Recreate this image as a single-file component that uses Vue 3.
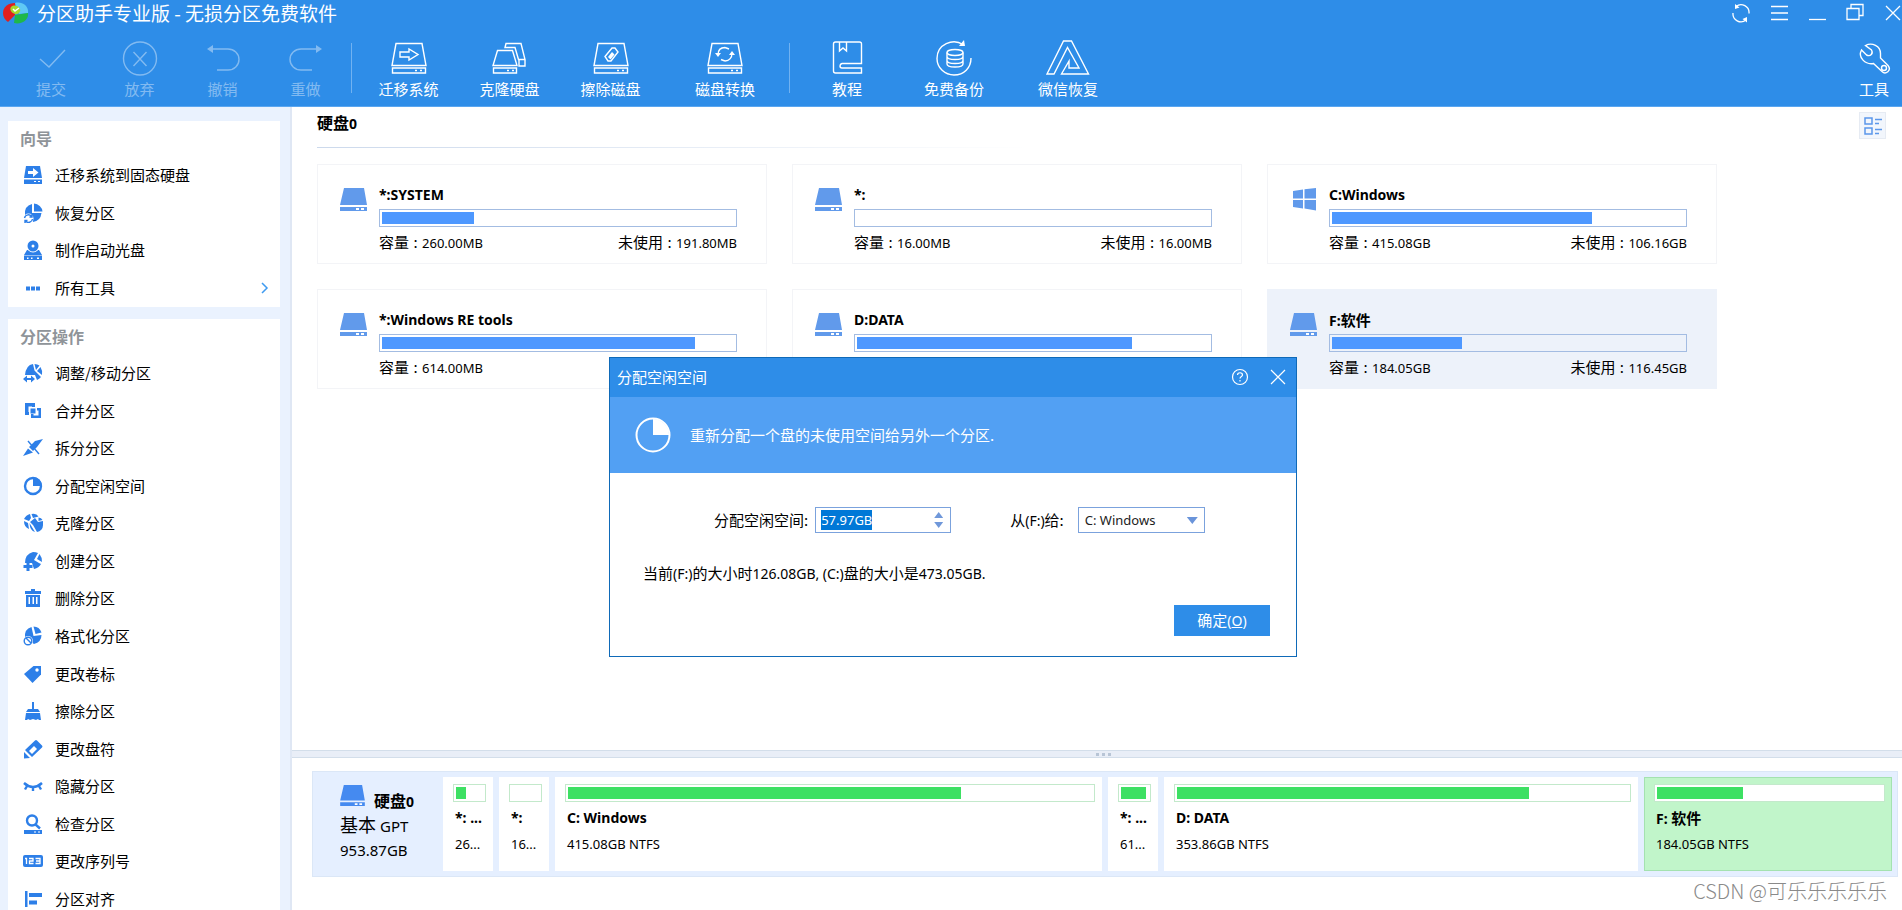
<script setup>
import { onMounted, ref } from 'vue'

const drive = '<path d="M9 3.500h26l4 22H5z"/><path d="M5.500 28h33v5h-33z"/><path d="M28 30.500h2m3 0h2"/>'

const toolIcons = {
  commit: '<path d="M11 19l9 8 16-17"/>',
  discard: '<circle cx="22" cy="18.500" r="16.500"/><path d="M15.500 12l13 14m0-14l-13 14"/>',
  undo: '<path d="M10 9h17a11 10.500 0 0 1 0 21H16"/><path class="solid" d="M6 9l6-4v8z"/>',
  redo: '<path d="M34 9H17a11 10.500 0 0 0 0 21h11"/><path class="solid" d="M38 9l-6-4v8z"/>',
  migrate: drive + '<path d="M13 12h9V9l9 5.500-9 5.500v-3h-9z"/>',
  clone: '<path d="M9.500 10.500h15L29 25.500H5zM5.500 28h23v5h-23zM17 7.500l1-4h15l4 16h-6.500L27 7.500zM31 20v6h6v-6M19 30.500h2m3 0h2"/>',
  erase: drive + '<path d="M16 16.500l7-8.500h3l3 4-7 9h-3z"/><path class="solid" d="M19 17l4-5 2.500 2.500-4 5z"/>',
  convert: drive + '<path d="M15 15c0-5 3-7.500 7-7.500M29 13c0 5-3 8-7 8M22 7.500l4 1.500M22 21l-4-1.500"/><path class="solid" d="M12 13h6l-3 4zM26 15h6l-3-4z"/>',
  book: '<path d="M36.500 23.500V4q0-2-2-2H10.500q-2 0-2 2v27q0 2 2 2h26V28H17q-2 0-2-2t2-2.500zM14.500 2v9l3.500-3 3.500 3V2"/>',
  backup: '<path d="M31 4.500C21-2 5 4 5 18.500 5 28 13 35 22 35c10 0 17-7 17-17"/><path class="solid" d="M32 0l1 6h-6z"/><ellipse cx="23" cy="12.500" rx="8" ry="3"/><path d="M15 12.500V24c0 4 16 4 16 0V12.500M15 16.500c0 4 16 4 16 0M15 20.500c0 4 16 4 16 0"/>',
  wechat: '<path d="M17.500 1h8l17 33h-27L23 21v7h10L21.500 7.500 8 34H1z"/>',
  wrench: '<path d="M13.500 5.500C20 2 28.500 6 28.500 13.500v4.500l7.500 7.500c4 5-2.500 9.500-6 6L21.500 23.500c-8 1.500-16-6-12-13.500l5 5c4 2 7-1.500 5-5z"/><circle cx="32" cy="28" r="2.500"/>'
}

const groups = [
  { key: 'edit', items: [['commit', '提交', 'wide'], ['discard', '放弃', ''], ['undo', '撤销', ''], ['redo', '重做', '']] },
  { key: 'drives', items: [['migrate', '迁移系统', ''], ['clone', '克隆硬盘', ''], ['erase', '擦除磁盘', ''], ['convert', '磁盘转换', 'wide']] },
  { key: 'more', items: [['book', '教程', 'wide'], ['backup', '免费备份', ''], ['wechat', '微信恢复', 'wide']] }
]

const icons = {
  migrate: '<path d="M3 1h14l2 12H1z"/><path d="M1 14.500h18V19H1z"/><path class="w" d="M5 6h5V3l5.500 4.500L10 12V9H5z"/><path class="w" d="M11 16h2v1h-2zm4 0h2v1h-2z"/>',
  recover: '<path d="M9 1v9h9.500q-1 8-8.500 9l-1-6-7-1Q1 3 9 1z"/><path d="M11 0.500a9 9 0 0 1 8.500 8H11z"/><circle class="w" cx="5.500" cy="15.500" r="5"/><path class="t" d="M1.500 15a4 4 0 0 1 7.500-1M9.500 16a4 4 0 0 1-7 2M9 11.500V14H6.500M2 20v-2.500h2.500"/>',
  boot: '<path d="M4 10l-3 5h18l-3-5zM1 15.500h18V20H1z"/><circle class="w" cx="10" cy="6" r="6.500"/><circle cx="10" cy="6" r="5.500"/><circle class="w" cx="10" cy="6" r="1.500"/><path class="w" d="M4 17.500h1.500V19H4zm4 0h1.500V19H8zm6 0h2V19h-2z"/>',
  dots: '<path d="M3 8.500h4v4H3zm5 0h4v4H8zm5 0h4v4h-4z"/>',
  resize: '<path d="M10 1l1.500 6.500L18 14a9 9 0 0 1-4 3l-2-5H2Q3 2 10 1z"/><path d="M11.500 1q3 0 5 1.500L13 7zM17.500 4q2 3 1.500 8L14 8z"/><path d="M0 16l4-3.500V15h4v-2.500L12 16l-4 3.500V17H4v2.500z"/>',
  merge: '<path d="M2 2h10v4H9V5.500H5.500V11H6v3H2zM18 7v10H8v-4h2.500v1.500h5V9.500H14V7z"/><path d="M7.500 7.500h5v5h-5z"/>',
  split: '<path d="M20 1l-8 2-6 6 4 4 4-4zM5 10.500l5 4L0 18z"/><path class="t" d="M5 3l11 13"/>',
  alloc: '<path d="M10 1a9 9 0 0 1 9 9h-9z"/><circle class="s" cx="10" cy="10" r="8"/>',
  clone: '<path d="M1 6Q3 2 7 1l1 4-2 3zM8.500 1q5-1 7 2.500L10 5zM1 8l4 2 1 6Q1 14 1 8z"/><path d="M7 9l5-4 3 4 5-1v4a7 7 0 0 1-6 7l-4-7zM15.500 4.500q3 0 4 2.500l-4 1zM6.500 10l5.500 9Q7 18 6.500 10z"/>',
  create: '<path d="M10 1q3 0 5 1l-4 7 5 3 2 1q-2 4-7 5l-2-6H2Q2 3 10 1z"/><path d="M16.500 3q2.500 3 2.500 8l-5-3z"/><path d="M3.500 11h3v3h3v3h-3v3h-3v-3h-3v-3h3z"/>',
  trash: '<path d="M8 1h4v2h6v3H2V3h6zM3 7h14v12H3z"/><path class="w" d="M5.500 9H7v7H5.500zm4 0H11v7H9.500zm3.500 0h1.500v7H13z"/>',
  format: '<path d="M8.500 1l2 9 8-1q0 7-7.500 9L2 12Q1 3 8.500 1z"/><path d="M10.500 0.500q6 0 8 6l-6 1.500z"/><circle cx="5" cy="15" r="5" class="w"/><circle class="t" cx="5" cy="15" r="3.800"/><path class="t" d="M3 12l5 5"/>',
  tag: '<path d="M10.500 2H18v8.500L9.500 19 1 10z"/><circle class="w" cx="14" cy="6" r="1.700"/>',
  broom: '<path d="M9 1h2v7h4l2 3H3l2-3h4zM3 12h14l1 7h-2l-1-1-2 1-3-1-3 1-2-1-1 1H2z"/>',
  pencil: '<path d="M1 13l6 6-6 .500zM2 11L12 1.500q1-1 2 0l5 5q1 1 0 2L9 18z"/><path class="w" d="M6 12l5-5 3 3-5 5z"/>',
  hide: '<path class="s" d="M1 7q9 8 18 0M4 10l-2 3.500M10 11v4M16 10l2 3.500"/>',
  check: '<circle class="s" cx="9" cy="6.500" r="5"/><path class="s" d="M12 10l5 4.500"/><path d="M1 16h18v4H1z"/><path class="w" d="M11 17.500h2v1h-2zm4 0h2v1h-2z"/>',
  serial: '<rect x="0" y="4" width="20" height="12" rx="2"/><path class="ws" d="M2 7.500h1.500V13M6 7.500h4V10H6.500v2.500h4M12.500 7.500h4.500v5h-4.500M13 10h4"/>',
  align: '<path d="M2 2h2.500v16H2zM6 4h13v4H6zM6 11.500h8v4H6z"/>'
}

const wizard = [['migrate', '迁移系统到固态硬盘'], ['recover', '恢复分区'], ['boot', '制作启动光盘'], ['dots', '所有工具']]
const operations = [
  ['resize', '调整/移动分区'], ['merge', '合并分区'], ['split', '拆分分区'], ['alloc', '分配空闲空间'],
  ['clone', '克隆分区'], ['create', '创建分区'], ['trash', '删除分区'], ['format', '格式化分区'],
  ['tag', '更改卷标'], ['broom', '擦除分区'], ['pencil', '更改盘符'], ['hide', '隐藏分区'],
  ['check', '检查分区'], ['serial', '更改序列号'], ['align', '分区对齐']
]

const volumes = [
  { drive: '*:', label: 'SYSTEM', used: 26, size: '260.00MB', free: '191.80MB' },
  { drive: '*:', label: '', used: 0, size: '16.00MB', free: '16.00MB' },
  { drive: 'C:', label: 'Windows', used: 74, size: '415.08GB', free: '106.16GB', windows: true },
  { drive: '*:', label: 'Windows RE tools', used: 89, size: '614.00MB' },
  { drive: 'D:', label: 'DATA', used: 78, size: '' },
  { drive: 'F:', label: '软件', cjk: true, used: 37, size: '184.05GB', free: '116.45GB', active: true }
]

const segments = [
  { drive: '*:', label: '...', info: '26...', used: 36, weight: 0 },
  { drive: '*:', label: '', info: '16...', used: 0, weight: 0 },
  { drive: 'C:', label: 'Windows', info: '415.08GB NTFS', used: 75, weight: 530 },
  { drive: '*:', label: '...', info: '61...', used: 92, weight: 0 },
  { drive: 'D:', label: 'DATA', info: '353.86GB NTFS', used: 78, weight: 457 },
  { drive: 'F:', label: '软件', cjk: true, info: '184.05GB NTFS', used: 38, weight: 231, active: true }
]

const amount = ref('57.97GB')
const amountBox = ref(null)
onMounted(() => {
  amountBox.value.focus()
  amountBox.value.select()
})
</script>

<template>
  <div class="app">
    <header class="head">
      <div class="titlebar">
        <svg class="logo" viewBox="0 0 26 22">
          <path d="M12 1C5 1 0 5 0 11c0 4 2 7 5 9l7-7z" fill="#e01f1f" />
          <path d="M12 1c7-2 14 3 13 10l-9 1z" fill="#5fc8f5" />
          <path d="M25 11c1 7-7 12-14 10l1-8z" fill="#1fb84a" />
          <path d="M8 5c3-3 8-1 9 2s-2 6-5 5-6-4-4-7z" fill="#a5d92c" />
          <path d="M10 7l2 2 4-3" fill="none" stroke="#fff" stroke-width="1.5" />
        </svg>
        <h1>分区助手专业版 - 无损分区免费软件</h1>
        <div class="controls">
          <button aria-label="刷新"><svg viewBox="0 0 18 20"><path d="M4 3.500a8 8 0 0 1 13 7M14 17a8 8 0 0 1-13-7" /><path class="solid" d="M3 1l4.500 3.500L3 6zM15 19.500L10.500 16l4.500-2z" /></svg></button>
          <button aria-label="菜单"><svg viewBox="0 0 18 20"><path d="M1 3.500h17M1 10h17M1 16.500h17" /></svg></button>
          <button aria-label="最小化"><svg viewBox="0 0 18 20"><path d="M1 16.500h17" /></svg></button>
          <button aria-label="还原"><svg viewBox="0 0 18 20"><path d="M1 5.500h12v11H1zM5 5V1.500h12v11h-4" /></svg></button>
          <button aria-label="关闭"><svg viewBox="0 0 18 20"><path d="M2 3l14 14M16 3L2 17" /></svg></button>
        </div>
      </div>
      <nav class="toolbar">
        <div v-for="g in groups" :key="g.key" class="group" :class="g.key">
          <button v-for="t in g.items" :key="t[0]" :class="t[2]">
            <svg viewBox="0 0 44 36" v-html="toolIcons[t[0]]"></svg>
            <span>{{ t[1] }}</span>
          </button>
        </div>
        <div class="group end">
          <button><svg viewBox="0 0 44 36" v-html="toolIcons.wrench"></svg><span>工具</span></button>
        </div>
      </nav>
    </header>

    <div class="body">
      <aside class="side">
        <section>
          <h2>向导</h2>
          <ul class="wizard">
            <li v-for="w in wizard" :key="w[0]">
              <button>
                <svg viewBox="0 0 20 20" v-html="icons[w[0]]"></svg>{{ w[1] }}
                <svg v-if="w[0] === 'dots'" class="chev" viewBox="0 0 8 12"><path d="M1 1l5 5-5 5" /></svg>
              </button>
            </li>
          </ul>
        </section>
        <section>
          <h2>分区操作</h2>
          <ul class="ops">
            <li v-for="o in operations" :key="o[0]">
              <button><svg viewBox="0 0 20 20" v-html="icons[o[0]]"></svg>{{ o[1] }}</button>
            </li>
          </ul>
        </section>
      </aside>

      <main class="main">
        <div class="upper">
          <div class="disk-head">
            <h2>硬盘<b>0</b></h2>
            <button class="view" aria-label="视图">
              <svg viewBox="0 0 18 18"><path d="M1 1h7v6H1zM1 11h7v6H1zM11 2.500h7M11 6.500h4M11 12.500h7M11 16.500h4" /></svg>
            </button>
          </div>
          <div class="cards">
            <article v-for="v in volumes" :key="v.drive + v.label" :class="{ active: v.active }">
              <svg v-if="v.windows" class="disk" viewBox="0 0 27 23">
                <path d="M3 3l10-1.500v9H3zM14.500 1.300L26 0v10.500H14.500zM3 12h10v8.500L3 19zM14.500 12H26v10.500l-11.500-2z" />
              </svg>
              <svg v-else class="disk" viewBox="0 0 27 23">
                <path d="M4 0h20l3 17H0zM0 19h27v4H0z" /><path class="w" d="M16 20h3v2h-3zm5 0h3v2h-3z" />
              </svg>
              <div class="info">
                <h3>{{ v.drive }}<span :class="{ cjk: v.cjk }">{{ v.label }}</span></h3>
                <div class="bar"><i v-if="v.used" :style="{ width: v.used + '%' }"></i></div>
                <div class="nums">
                  <span v-if="v.size">容量<em>:</em><b>{{ v.size }}</b></span>
                  <span v-if="v.free">未使用<em>:</em><b>{{ v.free }}</b></span>
                </div>
              </div>
            </article>
          </div>
        </div>
        <div class="splitter"><i></i><i></i><i></i></div>
        <div class="lower">
          <div class="map">
            <div class="disk-info">
              <div class="row">
                <svg class="disk" viewBox="0 0 27 23">
                  <path d="M4 0h20l3 17H0zM0 19h27v4H0z" /><path class="w" d="M16 20h3v2h-3zm5 0h3v2h-3z" />
                </svg>
                <h2>硬盘<b>0</b></h2>
              </div>
              <p class="kind">基本 <span>GPT</span></p>
              <p class="total">953.87GB</p>
            </div>
            <div v-for="(s, n) in segments" :key="n" class="seg" :class="{ active: s.active, small: !s.weight }" :style="{ flexGrow: s.weight }">
              <div class="bar"><i v-if="s.used" :style="{ width: s.used + '%' }"></i></div>
              <h3>{{ s.drive }} <span :class="{ cjk: s.cjk }">{{ s.label }}</span></h3>
              <p>{{ s.info }}</p>
            </div>
          </div>
          <p class="mark">CSDN @可乐乐乐乐乐</p>
        </div>
      </main>
    </div>

    <div class="dialog" role="dialog" aria-labelledby="dlg-title">
      <div class="dlg-head">
        <h2 id="dlg-title">分配空闲空间</h2>
        <button aria-label="帮助"><svg viewBox="0 0 18 18"><circle cx="9" cy="9" r="7.500" /><path d="M6.500 7c0-3 5-3 5 0 0 1.500-2.500 1.500-2.500 3.500m0 1.500v1.500" /></svg></button>
        <button aria-label="关闭对话框"><svg viewBox="0 0 18 18"><path d="M2 2l14 14M16 2L2 16" /></svg></button>
      </div>
      <div class="banner">
        <svg viewBox="0 0 36 36"><circle cx="18" cy="18" r="16.500" /><path d="M18 2a16 16 0 0 1 16 16H18z" /></svg>
        <p>重新分配一个盘的未使用空间给另外一个分区.</p>
      </div>
      <form class="form" @submit.prevent>
        <div class="fields">
          <label for="amount">分配空闲空间:</label>
          <div class="spin">
            <input id="amount" ref="amountBox" v-model="amount" type="text">
            <div class="steps">
              <button type="button" aria-label="增加"></button>
              <button type="button" aria-label="减少" class="down"></button>
            </div>
          </div>
          <label class="to" for="target">从<span>(F:)</span>给:</label>
          <div class="pick">
            <select id="target"><option>C: Windows</option></select>
          </div>
        </div>
        <p class="note">当前<span>(F:)</span>的大小时<span>126.08GB, (C:)</span>盘的大小是<span>473.05GB.</span></p>
        <button class="ok">确定<span>(<u>O</u>)</span></button>
      </form>
    </div>
  </div>
</template>

<style>
html,
body {
  margin: 0;
  height: 100%;
  overflow: hidden;
}
</style>

<style scoped>
* {
  box-sizing: border-box;
}

.app {
  --latin: "Noto Sans", "Noto Sans CJK SC", sans-serif;
  display: flex;
  flex-direction: column;
  height: 100vh;
  overflow: hidden;
  background: #fff;
  color: #000;
  font: 15px/20px "Noto Sans CJK SC", sans-serif;
}

h1, h2, h3, p, ul {
  margin: 0;
  padding: 0;
  font-size: inherit;
}

button {
  margin: 0;
  padding: 0;
  border: 0;
  background: none;
  color: inherit;
  font: inherit;
}

svg {
  display: block;
  flex: none;
}

/* header */
.head {
  flex: none;
  height: 107px;
  background: #2e8de8;
  color: #fff;
  border-bottom: 1px solid #5aa6f0;
}

.titlebar {
  display: flex;
  align-items: center;
  height: 25px;
  padding-left: 3px;
}

.logo {
  width: 26px;
  height: 22px;
}

.titlebar h1 {
  margin-left: 8px;
  font-size: 19px;
  font-weight: 400;
  line-height: 24px;
}

.controls {
  display: flex;
  gap: 20px;
  margin-left: auto;
}

.controls svg {
  width: 18px;
  height: 20px;
  fill: none;
  stroke: #fff;
  stroke-width: 1.3;
}

.toolbar {
  display: flex;
  height: 80px;
  padding-left: 4px;
}

.group {
  display: flex;
  align-items: flex-start;
}

.group button {
  display: flex;
  flex-direction: column;
  align-items: center;
  gap: 3px;
  padding-top: 15px;
  width: 83px;
  white-space: nowrap;
}

.edit .wide {
  width: 94px;
}

.edit button {
  opacity: 0.4;
}

.group svg {
  width: 44px;
  height: 36px;
  fill: none;
  stroke: #fff;
  stroke-width: 1.4;
}

.group :deep(.solid),
.controls .solid {
  fill: #fff;
  stroke: none;
}

.drives::before,
.more::before {
  content: "";
  width: 1px;
  height: 50px;
  margin-top: 18px;
  background: #71b2f1;
}

.drives::before {
  margin: 18px 6px 0 4px;
}

.drives button {
  width: 101px;
}

.drives .wide {
  width: 128px;
}

.more button {
  width: 100px;
}

.more .wide {
  width: 114px;
}

.more .wide:last-child {
  width: 128px;
}

.group.end {
  margin-left: auto;
}

.group.end button {
  width: 56px;
}

/* sidebar */
.body {
  display: flex;
  flex: 1;
  min-height: 0;
}

.side {
  flex: none;
  display: flex;
  flex-direction: column;
  gap: 12px;
  width: 292px;
  padding: 14px 10px 0 8px;
  background: #eaf2fe;
  border-right: 2px solid #dfe7f4;
  overflow: hidden;
}

.side section {
  flex: none;
  background: #fff;
}

.side h2 {
  height: 36px;
  padding-left: 12px;
  font-size: 16px;
  line-height: 34px;
  color: #8f9499;
}

.side ul {
  display: grid;
  grid-auto-rows: 1fr;
  list-style: none;
}

.wizard {
  height: 150px;
}

.ops {
  height: 563px;
}

.side li button {
  display: flex;
  align-items: center;
  width: 100%;
  height: 100%;
  padding: 0 11px 1px 15px;
  gap: 12px;
}

.side svg {
  width: 20px;
  height: 20px;
  fill: #2d7fe8;
}

.side :deep(.w) {
  fill: #fff;
}

.side :deep(.s) {
  fill: none;
  stroke: #2d7fe8;
  stroke-width: 2.4;
}

.side :deep(.t) {
  fill: none;
  stroke: #2d7fe8;
  stroke-width: 1.4;
}

.side :deep(.ws) {
  fill: none;
  stroke: #fff;
  stroke-width: 1.3;
}

.side .chev {
  width: 8px;
  height: 12px;
  margin-left: auto;
  fill: none;
  stroke: #3f9bf0;
  stroke-width: 1.5;
}

/* volume list */
.main {
  display: flex;
  flex-direction: column;
  flex: 1;
  min-width: 0;
}

.upper {
  flex: 1;
  min-height: 0;
  padding-left: 25px;
  overflow: hidden;
}

.disk-head {
  display: flex;
  justify-content: space-between;
  height: 41px;
  padding: 5px 16px 0 0;
  border-bottom: 1px solid;
  border-image: linear-gradient(90deg, #ccd9ec, #fff 45%) 1;
}

.main h2 {
  font-size: 16px;
  line-height: 20px;
}

.main h2 b {
  font: bold 14px/20px var(--latin);
}

.view {
  display: grid;
  place-items: center;
  width: 27px;
  height: 27px;
  background: #f2f6fc;
  border: 1px solid #e6ebf3;
}

.view svg {
  width: 18px;
  height: 18px;
  fill: none;
  stroke: #5b97ea;
  stroke-width: 1.5;
}

.cards {
  display: grid;
  grid-template-columns: repeat(auto-fill, 450px);
  gap: 25px;
  padding-top: 16px;
}

.cards article {
  display: flex;
  gap: 12px;
  height: 100px;
  padding: 20px 29px 0 22px;
  border: 1px solid #f3f4f7;
}

.cards article.active {
  background: #edf2fa;
  border-color: #edf2fa;
}

.disk {
  width: 27px;
  height: 23px;
  margin-top: 3px;
  fill: #619aeb;
}

.disk .w {
  fill: #fff;
}

.info {
  flex: 1;
  min-width: 0;
}

h3 {
  height: 20px;
  font: bold 14px/20px var(--latin);
  white-space: nowrap;
}

h3 .cjk {
  font-size: 15px;
}

.bar {
  height: 18px;
  padding: 2px;
  border: 1px solid #a3bce2;
}

.bar i {
  display: block;
  height: 12px;
  background: #4e98ff;
}

.info .bar {
  margin-top: 4px;
}

.nums {
  display: flex;
  justify-content: space-between;
  margin-top: 5px;
}

.nums b {
  font: 13px/20px var(--latin);
}

.nums em {
  display: inline-block;
  width: 13px;
  text-align: center;
  font-style: normal;
}

/* disk map */
.splitter {
  display: flex;
  flex: none;
  justify-content: center;
  align-items: center;
  gap: 3px;
  height: 8px;
  padding-left: 12px;
  background: #e9eef7;
  border: 1px solid #d3deea;
  border-width: 1px 0;
}

.splitter i {
  width: 3px;
  height: 3px;
  background: #b8c5d6;
}

.lower {
  flex: none;
  height: 152px;
  padding: 13px 4px 0 20px;
}

.map {
  display: flex;
  gap: 6px;
  height: 106px;
  padding: 5px;
  background: #e5efff;
  border: 1px solid #dbe7f7;
}

.disk-info {
  flex: none;
  width: 119px;
  padding: 5px 0 0 22px;
}

.disk-info .row {
  display: flex;
  gap: 9px;
}

.disk-info .disk {
  width: 25px;
  height: 21px;
  fill: #458af0;
}

.disk-info h2 {
  padding-top: 8px;
}

.kind {
  font-size: 18px;
  line-height: 24px;
}

.kind span {
  font: 15px/24px var(--latin);
}

.total {
  font: 15px/24px var(--latin);
}

.seg {
  flex: 0 1 0;
  min-width: 0;
  padding: 7px 7px 0 10px;
  background: #fff;
}

.seg.small {
  flex: none;
  width: 50px;
}

.seg.active {
  background: #c1f5ca;
  border: 1px solid #a4e2b0;
  padding: 6px 6px 0 9px;
}

.seg .bar {
  background: #fff;
  border-color: #c3e9cb;
}

.seg .bar i {
  background: #3de063;
}

.seg h3 {
  margin: 6px 0 0 2px;
}

.seg p {
  margin: 6px 0 0 2px;
  font: 13px/20px var(--latin);
  white-space: nowrap;
}

.mark {
  padding: 2px 11px 0 0;
  text-align: right;
  font-size: 20px;
  line-height: 24px;
  font-weight: 300;
  color: #8a8a8a;
}

/* dialog */
.dialog {
  position: absolute;
  left: 609px;
  top: 357px;
  width: 688px;
  background: #fff;
  border: 1px solid #0f6ab8;
}

.dlg-head {
  display: flex;
  align-items: center;
  gap: 20px;
  height: 39px;
  padding: 0 9px 2px 7px;
  background: #2e8de8;
  color: #fff;
}

.dlg-head h2 {
  flex: 1;
  font-weight: 400;
}

.dlg-head svg {
  width: 18px;
  height: 18px;
  fill: none;
  stroke: #fff;
  stroke-width: 1.2;
}

.banner {
  display: flex;
  align-items: center;
  gap: 19px;
  height: 76px;
  padding-left: 25px;
  background: #52a0f3;
  color: #fff;
}

.banner svg {
  width: 36px;
  height: 36px;
}

.banner circle {
  fill: none;
  stroke: #fff;
  stroke-width: 2;
}

.banner path {
  fill: #fff;
}

.form {
  display: flex;
  flex-direction: column;
  height: 183px;
  padding: 34px 26px 20px 33px;
}

.fields {
  display: flex;
  align-items: center;
  height: 26px;
  padding-left: 71px;
}

.form span {
  font: 14px/20px var(--latin);
}

.spin {
  display: flex;
  width: 136px;
  height: 26px;
  margin-left: 7px;
  padding-left: 5px;
  border: 1px solid #7ba2dd;
}

.spin input {
  flex: 1;
  min-width: 0;
  padding: 0;
  border: 0;
  outline: 0;
  background: none;
  font: 13px/20px var(--latin);
}

.spin input::selection {
  background: #0078d7;
  color: #fff;
}

.steps {
  display: flex;
  flex-direction: column;
  justify-content: center;
  gap: 4px;
  width: 16px;
}

.steps button {
  width: 9px;
  height: 6px;
  background: #7098da;
  clip-path: polygon(50% 0, 100% 100%, 0 100%);
}

.steps .down {
  clip-path: polygon(0 0, 100% 0, 50% 100%);
}

.to {
  margin-left: 59px;
}

.pick {
  position: relative;
  margin-left: 14px;
}

.pick select {
  width: 127px;
  height: 26px;
  padding: 0 6px;
  border: 1px solid #7ba2dd;
  border-radius: 0;
  background: #fff;
  color: #222;
  appearance: none;
  font: 13px/20px var(--latin);
}

.pick::after {
  content: "";
  position: absolute;
  right: 7px;
  top: 10px;
  width: 11px;
  height: 7px;
  background: #6a94da;
  clip-path: polygon(0 0, 100% 0, 50% 100%);
  pointer-events: none;
}

.note {
  margin-top: 30px;
}

.ok {
  align-self: flex-end;
  width: 96px;
  height: 31px;
  margin-top: auto;
  background: #2e8de8;
  color: #fff;
}
</style>
